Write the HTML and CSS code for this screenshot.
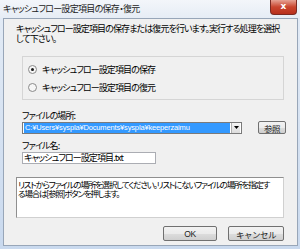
FILE: index.html
```html
<!DOCTYPE html>
<html lang="ja">
<head>
    <meta charset="UTF-8">
    <title>キャッシュフロー設定項目の保存・復元</title>
    <link rel="stylesheet" href="styles.css">
</head>
<body>
    <div class="window">
        <div class="titlebar">
            <span class="title">キャッシュフロー設定項目の保存・復元</span>
            <div class="close">x</div>
        </div>
        <div class="client">
            <p class="intro">キャッシュフロー設定項目の保存または復元を行います。実行する処理を選択<br>して下さい。</p>
            <div class="group">
                <div class="radio-row"><span class="radio checked"></span>キャッシュフロー設定項目の保存</div>
                <div class="radio-row"><span class="radio"></span>キャッシュフロー設定項目の復元</div>
            </div>
            <div class="field-label">ファイルの場所:</div>
            <div class="path-row">
                <div class="combo">
                    <span class="combo-text">C:¥Users¥syspla¥Documents¥syspla¥keeperzaimu</span>
                    <span class="combo-drop">
                        <svg width="5" height="3" viewBox="0 0 5 3"><path d="M0 0h5L2.5 3z" fill="#000"/></svg>
                    </span>
                </div>
                <button class="btn browse">参照</button>
            </div>
            <div class="field-label name-label">ファイル名:</div>
            <div class="name-input">キャッシュフロー設定項目.txt</div>
            <div class="hint">リストからファイルの場所を選択してください。リストにないファイルの場所を指定す<br>る場合は[参照]ボタンを押します。</div>
            <div class="actions">
                <button class="btn ok">OK</button>
                <button class="btn cancel">キャンセル</button>
            </div>
        </div>
    </div>
</body>
</html>
```

FILE: styles.css
```css
body {
    margin: 0;
    font-family: "Noto Sans CJK JP", "DejaVu Sans", sans-serif;
    font-feature-settings: "palt";
    color: #000;
}
.window {
    width: 300px;
    height: 249px;
    background: linear-gradient(180deg, #e4ecf6, #c9d9ee);
    display: flex;
    flex-direction: column;
    overflow: hidden;
}
.titlebar {
    height: 18px;
    flex: none;
    display: flex;
    align-items: flex-start;
    justify-content: space-between;
    background: linear-gradient(180deg, #f3f6fa, #e6edf5);
}
.title {
    margin: 3px 0 0 3px;
    font-size: 9px;
    letter-spacing: -0.7px;
    line-height: 11px;
    color: #222;
    white-space: nowrap;
}
.close {
    width: 27px;
    height: 15px;
    margin-right: 3px;
    border: 1px solid #7a2a22;
    border-top: none;
    border-radius: 0 0 4px 4px;
    background: linear-gradient(180deg, #e6a294, #c9452e 50%, #b8301c);
    color: #fff;
    font-family: "DejaVu Sans", sans-serif;
    font-size: 9px;
    font-weight: bold;
    line-height: 13px;
    text-align: center;
    box-sizing: border-box;
}
.client {
    flex: 1;
    margin: 0 2px 3px 3px;
    background: #f0f0f0;
    border: 1px solid #98a6b8;
    display: flex;
    flex-direction: column;
    font-size: 9px;
    letter-spacing: -0.9px;
    white-space: nowrap;
}
.intro {
    margin: 5px 0 0 12px;
    line-height: 10px;
}
.group {
    margin: 12px 0 0 18px;
    width: 262px;
    height: 44px;
    flex: none;
    box-sizing: border-box;
    border: 1px solid #d5d5d5;
    padding: 7px 0 0 5px;
    display: flex;
    flex-direction: column;
    gap: 7px;
}
.radio-row {
    display: flex;
    align-items: center;
    height: 11px;
    line-height: 11px;
}
.radio {
    width: 7px;
    height: 7px;
    border: 1px solid #8a8a8a;
    border-radius: 50%;
    background: #f6f6f6;
    margin-right: 5px;
    position: relative;
}
.radio.checked::after {
    content: "";
    position: absolute;
    left: 2px;
    top: 2px;
    width: 3px;
    height: 3px;
    border-radius: 50%;
    background: #1a1a1a;
}
.field-label {
    margin: 10px 0 0 18px;
    height: 11px;
    line-height: 11px;
}
.path-row {
    display: flex;
    align-items: center;
    margin: 0 0 0 18px;
}
.combo {
    width: 220px;
    height: 12px;
    box-sizing: border-box;
    border: 1px solid #7a7a7a;
    background: #fff;
    display: flex;
    align-items: center;
    padding: 0 1px;
}
.combo-text {
    flex: 1;
    height: 10px;
    background: #3399ff;
    color: #fff;
    font-family: "Liberation Sans", sans-serif;
    font-size: 7.5px;
    letter-spacing: -0.15px;
    line-height: 10px;
    padding-left: 1px;
    overflow: hidden;
}
.combo-drop {
    width: 8px;
    height: 10px;
    margin-left: 1px;
    display: flex;
    align-items: center;
    justify-content: center;
    background: linear-gradient(180deg, #f4f4f4, #dcdcdc);
    border-left: 1px solid #b0b0b0;
}
.btn {
    font-family: inherit;
    font-size: 8.5px;
    letter-spacing: -0.5px;
    color: #222;
    border: 1px solid #707070;
    border-radius: 2px;
    background: linear-gradient(180deg, #f2f2f2 0%, #ebebeb 50%, #dddddd 51%, #cfcfcf 100%);
    padding: 0;
    line-height: 10px;
}
.browse {
    margin-left: 16px;
    width: 28px;
    height: 13px;
}
.name-label {
    margin-top: 6px;
}
.name-input {
    margin: 1px 0 0 18px;
    width: 134px;
    height: 12px;
    flex: none;
    box-sizing: border-box;
    border: 1px solid #abadb3;
    background: #fff;
    padding-left: 1px;
    line-height: 10px;
}
.hint {
    margin: 13px 0 0 12px;
    width: 268px;
    height: 41px;
    flex: none;
    box-sizing: border-box;
    border: 1px solid #8f8f8f;
    border-right-color: #d0d0d0;
    border-bottom-color: #d0d0d0;
    background: #fff;
    font-size: 8.5px;
    letter-spacing: -1.2px;
    line-height: 9px;
    padding: 2px 0 0 1px;
}
.actions {
    display: flex;
    justify-content: flex-end;
    gap: 11px;
    margin: 8px 13px 0 0;
}
.ok,
.cancel {
    height: 15px;
    width: 54px;
    font-family: "Liberation Sans", "Noto Sans CJK JP", sans-serif;
}
.cancel {
    width: 56px;
    font-family: inherit;
}
```
